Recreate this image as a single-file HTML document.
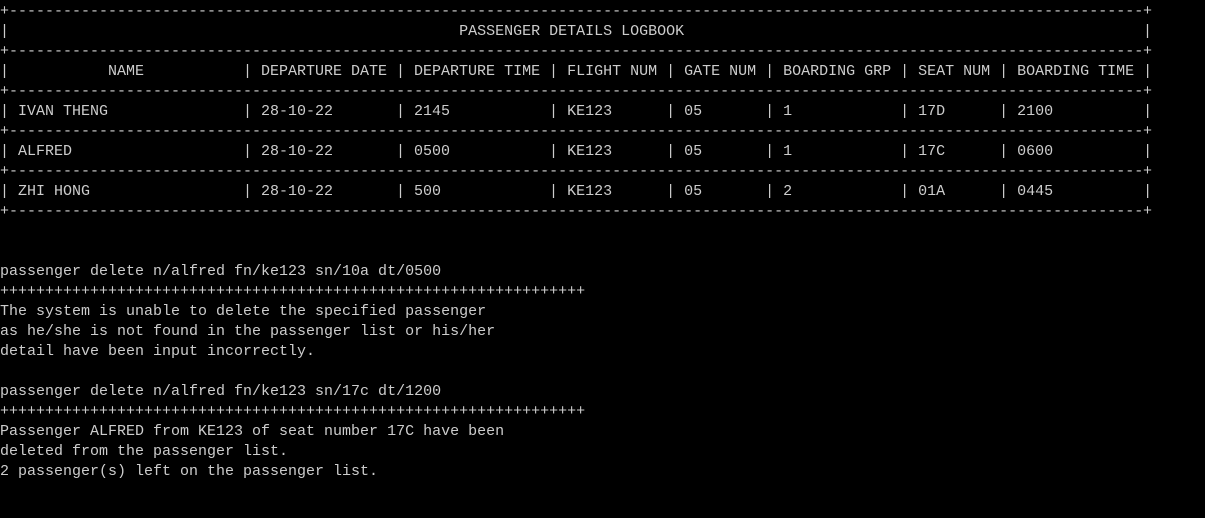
<!DOCTYPE html>
<html><head><meta charset="utf-8"><style>
html,body{margin:0;padding:0;background:#000;width:1205px;height:518px;overflow:hidden}
pre{margin:0;padding-top:2px;font-family:"Liberation Mono",monospace;font-size:15px;line-height:20px;color:#cccccc;white-space:pre}
.c{display:inline-block;overflow:hidden;vertical-align:top;white-space:pre}
.d{width:1134px}
.p{width:585px}
</style></head><body><pre>
+<span class="c d">------------------------------------------------------------------------------------------------------------------------------------------------------</span>+
|<span class="c d">                                                  PASSENGER DETAILS LOGBOOK</span>|
+<span class="c d">------------------------------------------------------------------------------------------------------------------------------------------------------</span>+
|<span class="c" style="width:234px">           NAME</span>|<span class="c" style="width:144px"> DEPARTURE DATE</span>|<span class="c" style="width:144px"> DEPARTURE TIME</span>|<span class="c" style="width:108px"> FLIGHT NUM</span>|<span class="c" style="width:90px"> GATE NUM</span>|<span class="c" style="width:126px"> BOARDING GRP</span>|<span class="c" style="width:90px"> SEAT NUM</span>|<span class="c" style="width:135px"> BOARDING TIME</span>|
+<span class="c d">------------------------------------------------------------------------------------------------------------------------------------------------------</span>+
|<span class="c" style="width:234px"> IVAN THENG</span>|<span class="c" style="width:144px"> 28-10-22</span>|<span class="c" style="width:144px"> 2145</span>|<span class="c" style="width:108px"> KE123</span>|<span class="c" style="width:90px"> 05</span>|<span class="c" style="width:126px"> 1</span>|<span class="c" style="width:90px"> 17D</span>|<span class="c" style="width:135px"> 2100</span>|
+<span class="c d">------------------------------------------------------------------------------------------------------------------------------------------------------</span>+
|<span class="c" style="width:234px"> ALFRED</span>|<span class="c" style="width:144px"> 28-10-22</span>|<span class="c" style="width:144px"> 0500</span>|<span class="c" style="width:108px"> KE123</span>|<span class="c" style="width:90px"> 05</span>|<span class="c" style="width:126px"> 1</span>|<span class="c" style="width:90px"> 17C</span>|<span class="c" style="width:135px"> 0600</span>|
+<span class="c d">------------------------------------------------------------------------------------------------------------------------------------------------------</span>+
|<span class="c" style="width:234px"> ZHI HONG</span>|<span class="c" style="width:144px"> 28-10-22</span>|<span class="c" style="width:144px"> 500</span>|<span class="c" style="width:108px"> KE123</span>|<span class="c" style="width:90px"> 05</span>|<span class="c" style="width:126px"> 2</span>|<span class="c" style="width:90px"> 01A</span>|<span class="c" style="width:135px"> 0445</span>|
+<span class="c d">------------------------------------------------------------------------------------------------------------------------------------------------------</span>+


passenger delete n/alfred fn/ke123 sn/10a dt/0500
<span class="c p">++++++++++++++++++++++++++++++++++++++++++++++++++++++++++++++++++++++++++++</span>
The system is unable to delete the specified passenger
as he/she is not found in the passenger list or his/her
detail have been input incorrectly.

passenger delete n/alfred fn/ke123 sn/17c dt/1200
<span class="c p">++++++++++++++++++++++++++++++++++++++++++++++++++++++++++++++++++++++++++++</span>
Passenger ALFRED from KE123 of seat number 17C have been
deleted from the passenger list.
2 passenger(s) left on the passenger list.
</pre></body></html>
